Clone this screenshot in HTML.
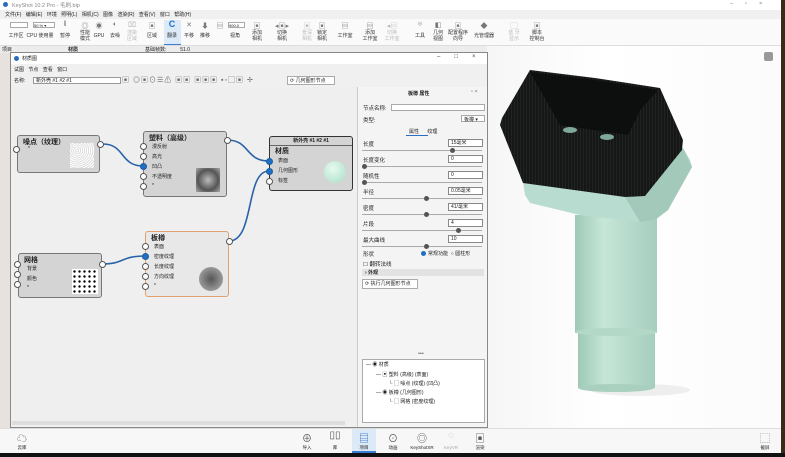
<!DOCTYPE html>
<html><head><meta charset="utf-8"><style>
*{margin:0;padding:0;box-sizing:border-box}
body{width:785px;height:457px;overflow:hidden;background:#fff;font-family:"Liberation Sans","Noto Sans CJK SC",sans-serif;font-size:6px;color:#222;position:relative}
.a{position:absolute}
.t{position:absolute;white-space:nowrap;font-size:5.5px}
.tb{position:absolute;top:30px;font-size:5px;line-height:6px;text-align:center;transform:translateX(-50%);white-space:nowrap;color:#333}
.ti{position:absolute;top:21px;font-size:7px;transform:translateX(-50%);color:#777}
.bi{position:absolute;top:430px;font-size:10px;transform:translateX(-50%);color:#555}
.bl{position:absolute;top:445px;font-size:4.5px;transform:translateX(-50%);white-space:nowrap}
.port{position:absolute;width:7px;height:7px;border-radius:50%;background:#fff;border:1px solid #555}
.port.b{background:#1f6fc4;border-color:#1f5fa0}
.node{position:absolute;background:#d4d4d4;border:1px solid #777;border-radius:3px}
.nt{position:absolute;font-size:7px;font-weight:bold;left:5px;top:1px}
.pl{position:absolute;font-size:5px}
.row{position:absolute;left:5px;font-size:5.5px}
.fld{position:absolute;left:90px;width:35px;height:8px;border:1px solid #888;background:#fff;font-size:5px;padding-left:2px;line-height:7px}
.sl{position:absolute;left:4px;width:120px;height:1px;background:#aaa}
.kn{position:absolute;width:5px;height:5px;border-radius:50%;background:#555;top:-2px}
</style></head><body>
<div class="a" style="left:781px;top:0;width:4px;height:457px;background:#3a2a1a"></div>
<div class="a" style="left:0;top:453px;width:785px;height:4px;background:#111"></div>
<div class="a" style="left:0;top:0;width:781px;height:10px;background:#fff"></div>
<div class="a" style="left:3px;top:2px;width:5px;height:5px;border-radius:50%;background:#2a6cc0"></div>
<div class="t" style="left:12px;top:1px;color:#888">KeyShot 10.2 Pro - 毛刷.bip</div>
<div class="t" style="left:730px;top:1px;color:#777;letter-spacing:12px">–▫×</div>
<div class="a" style="left:0;top:10px;width:781px;height:9px;background:#f0f0f0"></div>
<div class="t" style="left:5px;top:11px;font-size:5px;word-spacing:3px">文件(F) 编辑(E) 环境 照明(L) 相机(C) 图像 渲染(R) 查看(V) 窗口 帮助(H)</div>
<div class="a" style="left:0;top:19px;width:781px;height:27px;background:#fafafa;border-bottom:1px solid #ddd"></div>
<div class="a" style="left:164px;top:20px;width:17px;height:25px;background:#dce9f7;border-bottom:1px solid #3a7bd5"></div>
<div class="a" style="left:10px;top:22px;width:18px;height:6px;border:1px solid #aaa;background:#fff"></div>
<div class="a" style="left:33px;top:22px;width:22px;height:6px;border:1px solid #aaa;background:#fff;font-size:4px">50 % ▾</div>
<div class="a" style="left:228px;top:22px;width:17px;height:6px;border:1px solid #aaa;background:#fff;font-size:4px">900.0</div>
<span class="ti" style="left:65px">ǁ</span><span class="ti" style="left:85px">◎</span><span class="ti" style="left:99px">◉</span><span class="ti" style="left:115px">◐</span><span class="ti" style="left:132px;color:#bbb">⌧</span><span class="ti" style="left:152px">▣</span><span class="ti" style="left:172px;color:#1a6fd0;font-weight:bold;font-size:9px;top:19px">C</span><span class="ti" style="left:189px">✕</span><span class="ti" style="left:205px">⬇</span><span class="ti" style="left:220px">▤</span><span class="ti" style="left:257px">▣</span><span class="ti" style="left:282px">◂▣▸</span><span class="ti" style="left:307px;color:#bbb">▣</span><span class="ti" style="left:322px">▣</span><span class="ti" style="left:345px">▤</span><span class="ti" style="left:370px">▤</span><span class="ti" style="left:392px;color:#bbb">◂▤</span><span class="ti" style="left:420px">♅</span><span class="ti" style="left:438px">◧</span><span class="ti" style="left:458px">▣</span><span class="ti" style="left:484px">◆</span><span class="ti" style="left:514px;color:#bbb">▢</span><span class="ti" style="left:537px">▣</span>
<span class="tb" style="left:16px;top:33px">工作区</span><span class="tb" style="left:40px;top:33px">CPU 使用量</span><span class="tb" style="left:65px;top:33px">暂停</span><span class="tb" style="left:85px">性能<br>模式</span><span class="tb" style="left:99px;top:33px">GPU</span><span class="tb" style="left:115px;top:33px">去噪</span><span class="tb" style="left:132px;color:#bbb">渲染<br>区域</span><span class="tb" style="left:152px;top:33px">区域</span><span class="tb" style="left:172px;top:33px">翻录</span><span class="tb" style="left:189px;top:33px">平移</span><span class="tb" style="left:205px;top:33px">推移</span><span class="tb" style="left:235px;top:33px">视角</span><span class="tb" style="left:257px">添加<br>相机</span><span class="tb" style="left:282px">切换<br>相机</span><span class="tb" style="left:307px;color:#bbb">景深<br>相机</span><span class="tb" style="left:322px">锁定<br>相机</span><span class="tb" style="left:345px;top:33px">工作室</span><span class="tb" style="left:370px">添加<br>工作室</span><span class="tb" style="left:392px;color:#bbb">切换<br>工作室</span><span class="tb" style="left:420px;top:33px">工具</span><span class="tb" style="left:438px">几何<br>视图</span><span class="tb" style="left:458px">配置程序<br>向导</span><span class="tb" style="left:484px;top:33px">光管理器</span><span class="tb" style="left:514px;color:#bbb">蓝 牙<br>显示</span><span class="tb" style="left:537px">脚本<br>控制台</span>
<div class="a" style="left:0;top:46px;width:490px;height:7px;background:#ececec"></div>
<div class="t" style="left:2px;top:46px;font-size:5px">项目</div>
<div class="t" style="left:68px;top:46px;font-size:5px;font-weight:bold">材质</div>
<div class="t" style="left:145px;top:46px;font-size:5px">基础帧数: &nbsp;&nbsp;&nbsp;&nbsp;&nbsp;&nbsp;&nbsp;&nbsp; 51.0</div>
<div class="a" style="left:0;top:53px;width:10px;height:375px;background:#e8e2df"></div>
<div class="a" style="left:487px;top:46px;width:294px;height:382px;background:linear-gradient(90deg,#f6f6f6,#fff 40%,#fbfbfb)"></div>
<div class="a" style="left:764px;top:52px;width:9px;height:9px;border-radius:2px;background:#999"></div>
<svg class="a" style="left:0;top:0" width="785" height="457">
 <defs><linearGradient id="cy" x1="0" x2="1"><stop offset="0" stop-color="#9fc9b7"/><stop offset=".35" stop-color="#c6e6d8"/><stop offset="1" stop-color="#a6cdbd"/></linearGradient>
 <pattern id="br" width="3" height="40" patternUnits="userSpaceOnUse"><rect width="3" height="40" fill="#151616"/><rect x="1" width="0.6" height="40" fill="#2a2c2c"/></pattern></defs>
 <ellipse cx="640" cy="390" rx="50" ry="6" fill="#eee"/>
 <rect x="578" y="330" width="77" height="58" fill="url(#cy)"/>
 <ellipse cx="616" cy="388" rx="38" ry="4" fill="#a9cfbf"/>
 <rect x="575" y="215" width="82" height="118" fill="url(#cy)"/>
 <ellipse cx="616" cy="332" rx="41" ry="4" fill="#b4d8c8"/>
 <polygon points="523,182 625,197 683,148 690,160 692,167 668,210 655,220 640,222 580,215 530,203 525,195" fill="#b8ddd0"/>
 <polygon points="625,197 683,148 692,167 668,210 655,220 640,222" fill="#a2c9ba"/>
 <polygon points="502,118 530,70 595,78 660,88 683,140 682,150 645,196 625,197 523,183 500,125" fill="url(#br)"/>
 <polygon points="530,72 595,80 658,90 640,110 628,135 560,125" fill="#0d0e0e"/>
 <ellipse cx="570" cy="130" rx="7" ry="3" fill="#7fa79a"/>
 <ellipse cx="607" cy="137" rx="7" ry="3" fill="#7fa79a"/>
</svg>
<div class="a" style="left:10px;top:52px;width:478px;height:376px;background:#f0f0f0;border:1px solid #888"></div>
<div class="a" style="left:11px;top:53px;width:476px;height:11px;background:#fff"></div>
<div class="a" style="left:14px;top:56px;width:5px;height:5px;border-radius:50%;background:#2a6cc0"></div>
<div class="t" style="left:22px;top:55px;font-size:5px">材质图</div>
<div class="t" style="left:437px;top:54px;font-size:6px;color:#444;letter-spacing:14px">–□×</div>
<div class="t" style="left:14px;top:66px;font-size:5px;word-spacing:3px">试图 节点 查看 窗口</div>
<div class="t" style="left:14px;top:77px;font-size:5px">名称:</div>
<div class="a" style="left:33px;top:77px;width:88px;height:7px;border:1px solid #999;background:#fff;font-size:5px;padding-left:2px;line-height:6px">新外壳 #1 #2 #1</div>
<div class="t" style="left:122px;top:75px;font-size:7px;color:#666;letter-spacing:1px">▣ ◎▣⊙☰⚠ ▣▣ ▣▣▣ ▪◦▢▣ ✢</div>
<div class="a" style="left:287px;top:76px;width:48px;height:9px;border:1px solid #aaa;background:#fff;font-size:5px;padding-left:2px;line-height:8px">⟳ 几何图形节点</div>
<div class="a" style="left:12px;top:87px;width:345px;height:336px;background:#efefef"></div>
<div class="a" style="left:12px;top:421px;width:333px;height:4px;background:#ddd"></div>
<svg class="a" style="left:0;top:0" width="360" height="430">
 <g fill="none" stroke="#2a62a8" stroke-width="1.6">
  <path d="M103,144 C125,144 120,166 143,166"/>
  <path d="M227,140 C250,140 245,161 269,161"/>
  <path d="M229,241 C255,241 245,171 269,171"/>
  <path d="M102,264 C125,264 120,256 145,256"/>
 </g>
</svg>
<div class="node" style="left:17px;top:135px;width:83px;height:38px"><div class="nt">噪点（纹理）</div><div class="pl" style="left:10px;top:10px">*</div>
<div class="a" style="left:52px;top:7px;width:24px;height:25px;background:repeating-radial-gradient(circle at 30% 30%,#fff 0 1px,#ddd 1px 2px)"></div></div>
<div class="port" style="left:13px;top:146px"></div><div class="port" style="left:97px;top:141px"></div>
<div class="node" style="left:143px;top:131px;width:84px;height:66px"><div class="nt">塑料（高级）</div>
<div class="pl" style="left:8px;top:11px">漫反射</div><div class="pl" style="left:8px;top:21px">高光</div><div class="pl" style="left:8px;top:31px">凹凸</div><div class="pl" style="left:8px;top:41px">不透明度</div><div class="pl" style="left:8px;top:51px">*</div>
<div class="a" style="left:52px;top:36px;width:24px;height:24px;background:radial-gradient(circle,#bbb,#555 60%,#aaa)"></div></div>
<div class="port" style="left:140px;top:143px"></div><div class="port" style="left:140px;top:153px"></div><div class="port b" style="left:140px;top:163px"></div><div class="port" style="left:140px;top:173px"></div><div class="port" style="left:140px;top:183px"></div><div class="port" style="left:224px;top:137px"></div>
<div class="node" style="left:269px;top:136px;width:84px;height:55px;border-color:#333"><div class="a" style="left:0;top:0;width:82px;height:9px;border-bottom:1px solid #666;font-size:5px;text-align:center;font-weight:bold;line-height:8px">新外壳 #1 #2 #1</div>
<div class="nt" style="top:9px">材质</div><div class="pl" style="left:8px;top:20px">表面</div><div class="pl" style="left:8px;top:30px">几何图形</div><div class="pl" style="left:8px;top:40px">标签</div>
<div class="a" style="left:54px;top:24px;width:22px;height:22px;border-radius:50%;background:radial-gradient(circle at 40% 35%,#e6fbf0,#a8dcc6)"></div></div>
<div class="port b" style="left:266px;top:158px"></div><div class="port b" style="left:266px;top:168px"></div><div class="port" style="left:266px;top:178px"></div>
<div class="node" style="left:18px;top:253px;width:84px;height:45px"><div class="nt">网格</div><div class="pl" style="left:8px;top:11px">背景</div><div class="pl" style="left:8px;top:21px">颜色</div><div class="pl" style="left:8px;top:31px">*</div>
<div class="a" style="left:53px;top:15px;width:26px;height:25px;background:#fff radial-gradient(circle,#000 1px,transparent 1.4px) 0 0/5px 5px"></div></div>
<div class="port" style="left:14px;top:261px"></div><div class="port" style="left:14px;top:271px"></div><div class="port" style="left:14px;top:281px"></div><div class="port" style="left:99px;top:261px"></div>
<div class="node" style="left:145px;top:231px;width:84px;height:66px;background:#e8e8e8;border-color:#e0a070"><div class="nt">板樽</div>
<div class="pl" style="left:8px;top:11px">表面</div><div class="pl" style="left:8px;top:21px">密度纹理</div><div class="pl" style="left:8px;top:31px">长度纹理</div><div class="pl" style="left:8px;top:41px">方向纹理</div><div class="pl" style="left:8px;top:51px">*</div>
<div class="a" style="left:53px;top:35px;width:24px;height:24px;border-radius:50%;background:radial-gradient(circle,#555,#999 70%,#ccc)"></div></div>
<div class="port" style="left:142px;top:243px"></div><div class="port b" style="left:142px;top:253px"></div><div class="port" style="left:142px;top:263px"></div><div class="port" style="left:142px;top:273px"></div><div class="port" style="left:142px;top:283px"></div><div class="port" style="left:226px;top:238px"></div>
<div class="a" style="left:357px;top:87px;width:130px;height:340px;background:#f4f4f4;border-left:1px solid #ccc">
 <div class="t" style="left:50px;top:3px;font-weight:bold;font-size:5px">板樽 属性</div><div class="t" style="left:113px;top:2px;color:#777">▫ ×</div>
 <div class="row" style="top:17px">节点名称:</div><div class="a" style="left:33px;top:17px;width:94px;height:7px;border:1px solid #aaa;background:#fff"></div>
 <div class="row" style="top:29px">类型:</div><div class="a" style="left:103px;top:28px;width:24px;height:7px;border:1px solid #aaa;background:#fff;font-size:5px;padding-left:2px">板樽 ▾</div>
 <div class="t" style="left:51px;top:41px;font-size:5px">属性 &nbsp;&nbsp;&nbsp;&nbsp; 纹理</div><div class="a" style="left:48px;top:48px;width:22px;height:1px;background:#2a6cc0"></div>
 <div class="row" style="top:53px">长度</div><div class="fld" style="top:52px">15毫米</div><div class="sl" style="top:63px"><div class="kn" style="left:88px"></div></div>
 <div class="row" style="top:69px">长度变化</div><div class="fld" style="top:68px">0</div><div class="sl" style="top:79px"><div class="kn" style="left:0"></div></div>
 <div class="row" style="top:85px">随机性</div><div class="fld" style="top:84px">0</div><div class="sl" style="top:95px"><div class="kn" style="left:0"></div></div>
 <div class="row" style="top:101px">半径</div><div class="fld" style="top:100px">0.05毫米</div><div class="sl" style="top:111px"><div class="kn" style="left:62px"></div></div>
 <div class="row" style="top:117px">密度</div><div class="fld" style="top:116px">41/毫米</div><div class="sl" style="top:127px"><div class="kn" style="left:62px"></div></div>
 <div class="row" style="top:133px">片段</div><div class="fld" style="top:132px">4</div><div class="sl" style="top:143px"><div class="kn" style="left:94px"></div></div>
 <div class="row" style="top:149px">最大曲线</div><div class="fld" style="top:148px">10</div><div class="sl" style="top:159px"><div class="kn" style="left:62px"></div></div>
 <div class="row" style="top:163px">形状</div><div class="a" style="left:63px;top:164px;width:5px;height:5px;border-radius:50%;background:#1f6fc4"></div><div class="t" style="left:70px;top:163px;font-size:5px">常规功能 &nbsp;○ 圆柱形</div>
 <div class="row" style="top:173px">☐ 翻转法线</div>
 <div class="a" style="left:4px;top:182px;width:122px;height:7px;background:#e2e2e2;font-size:5px;padding-left:3px;font-weight:bold">› 外观</div>
 <div class="a" style="left:4px;top:192px;width:56px;height:10px;border:1px solid #aaa;background:#fff;font-size:5px;padding-left:2px;line-height:9px">⟳ 执行几何图形节点</div>
 <div class="t" style="left:60px;top:264px;color:#666">•••</div>
 <div class="a" style="left:4px;top:272px;width:123px;height:64px;border:1px solid #aaa;background:#fff">
  <div class="t" style="left:3px;top:1px;font-size:5px">— ◉ 材质</div>
  <div class="t" style="left:13px;top:11px;font-size:5px">— ▣ 塑料 (高级) (表面)</div>
  <div class="t" style="left:26px;top:20px;font-size:5px">└ ▢ 噪点 (纹理) (凹凸)</div>
  <div class="t" style="left:13px;top:29px;font-size:5px">— ◉ 板樽 (几何图形)</div>
  <div class="t" style="left:26px;top:38px;font-size:5px">└ ▢ 网格 (密度纹理)</div>
 </div>
</div>
<div class="a" style="left:0;top:428px;width:781px;height:25px;background:#f7f7f7;border-top:1px solid #ddd"></div>
<div class="a" style="left:352px;top:429px;width:24px;height:24px;background:#dce9f7;border-bottom:2px solid #3a7bd5"></div>
<span class="bi" style="left:22px">☁</span><span class="bl" style="left:22px">云库</span>
<span class="bi" style="left:307px">⊕</span><span class="bl" style="left:307px">导入</span>
<span class="bi" style="left:335px">▯▯</span><span class="bl" style="left:335px">库</span>
<span class="bi" style="left:364px;color:#2a6cc0">▤</span><span class="bl" style="left:364px">项目</span>
<span class="bi" style="left:393px">⊙</span><span class="bl" style="left:393px">动画</span>
<span class="bi" style="left:422px">◎</span><span class="bl" style="left:422px">KeyShotXR</span>
<span class="bi" style="left:451px;color:#bbb">◌</span><span class="bl" style="left:451px;color:#aaa">KeyVR</span>
<span class="bi" style="left:480px">▣</span><span class="bl" style="left:480px">渲染</span>
<span class="bi" style="left:765px">⬚</span><span class="bl" style="left:765px">截屏</span>
</body></html>
